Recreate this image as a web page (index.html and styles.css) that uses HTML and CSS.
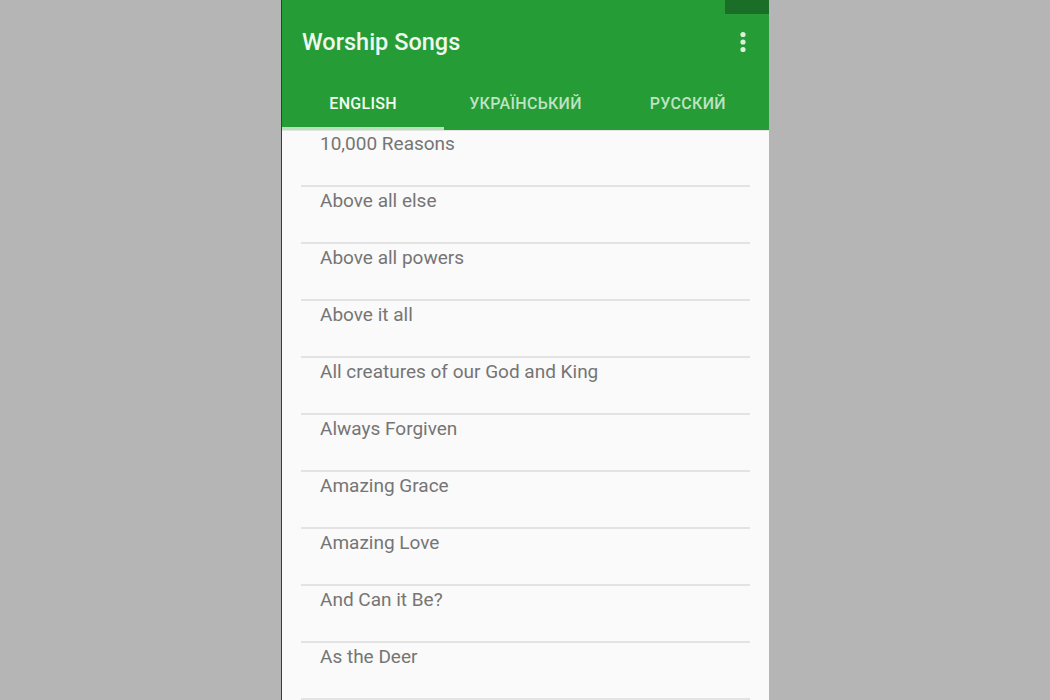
FILE: index.html
```html
<!DOCTYPE html>
<html>
<head>
<meta charset="utf-8">
<link rel="stylesheet" href="styles.css">
</head>
<body>
<div class="phone">
  <header class="appbar">
    <div class="status-chip"></div>
    <div class="toolbar">
      <h1 class="title">Worship Songs</h1>
      <svg class="menu" width="8" height="22" viewBox="0 0 8 22">
        <circle cx="4" cy="3.5" r="2.6"/>
        <circle cx="4" cy="11" r="2.6"/>
        <circle cx="4" cy="18.5" r="2.6"/>
      </svg>
    </div>
    <nav class="tabs">
      <div class="tab active">ENGLISH</div>
      <div class="tab">УКРАЇНСЬКИЙ</div>
      <div class="tab">РУССКИЙ</div>
    </nav>
  </header>
  <ul class="list">
    <li class="item">10,000 Reasons</li>
    <li class="item">Above all else</li>
    <li class="item">Above all powers</li>
    <li class="item">Above it all</li>
    <li class="item">All creatures of our God and King</li>
    <li class="item">Always Forgiven</li>
    <li class="item">Amazing Grace</li>
    <li class="item">Amazing Love</li>
    <li class="item">And Can it Be?</li>
    <li class="item">As the Deer</li>
  </ul>
</div>
</body>
</html>
```
FILE: styles.css
```css
* { box-sizing: border-box; }
html, body {
  margin: 0;
  padding: 0;
  height: 700px;
  overflow: hidden;
  background: #b4b5b4;
  font-family: Roboto, "Liberation Sans", sans-serif;
}
.phone {
  width: 488px;
  height: 700px;
  margin: 0 auto;
  border-left: 1px solid #3a3a3a;
  background: #fafafa;
  overflow: hidden;
}
.appbar {
  position: relative;
  background: #259c36;
  height: 130px;
  display: flex;
  flex-direction: column;
  box-shadow: 0 1px 0 #e4e6e4;
}
.status-chip {
  position: absolute;
  top: 0;
  right: 0;
  width: 44px;
  height: 14px;
  background: #1b6e27;
}
.toolbar {
  height: 84px;
  display: flex;
  align-items: center;
  justify-content: space-between;
  padding: 0 22px 0 20px;
}
.menu { margin-top: -1px; }
.title {
  margin: 0;
  font-size: 23.5px;
  font-weight: 500;
  color: #eef8ee;
  letter-spacing: 0;
}
.menu circle { fill: #d9f0db; }
.tabs {
  display: flex;
  flex: 1;
}
.tab {
  flex: 1;
  display: flex;
  align-items: center;
  justify-content: center;
  font-size: 16px;
  font-weight: 500;
  letter-spacing: 0.3px;
  color: rgba(235, 248, 235, 0.78);
  padding-bottom: 4px;
  border-bottom: 3px solid transparent;
}
.tab.active {
  color: #f2fbf2;
  border-bottom-color: #b6e2b9;
}
.list {
  list-style: none;
  margin: 0;
  padding: 0;
}
.item {
  height: 57px;
  margin: 0 19px;
  padding: 2px 0 0 19px;
  font-size: 19px;
  line-height: 24px;
  color: #757575;
  border-bottom: 2px solid #e3e3e3;
}
```
